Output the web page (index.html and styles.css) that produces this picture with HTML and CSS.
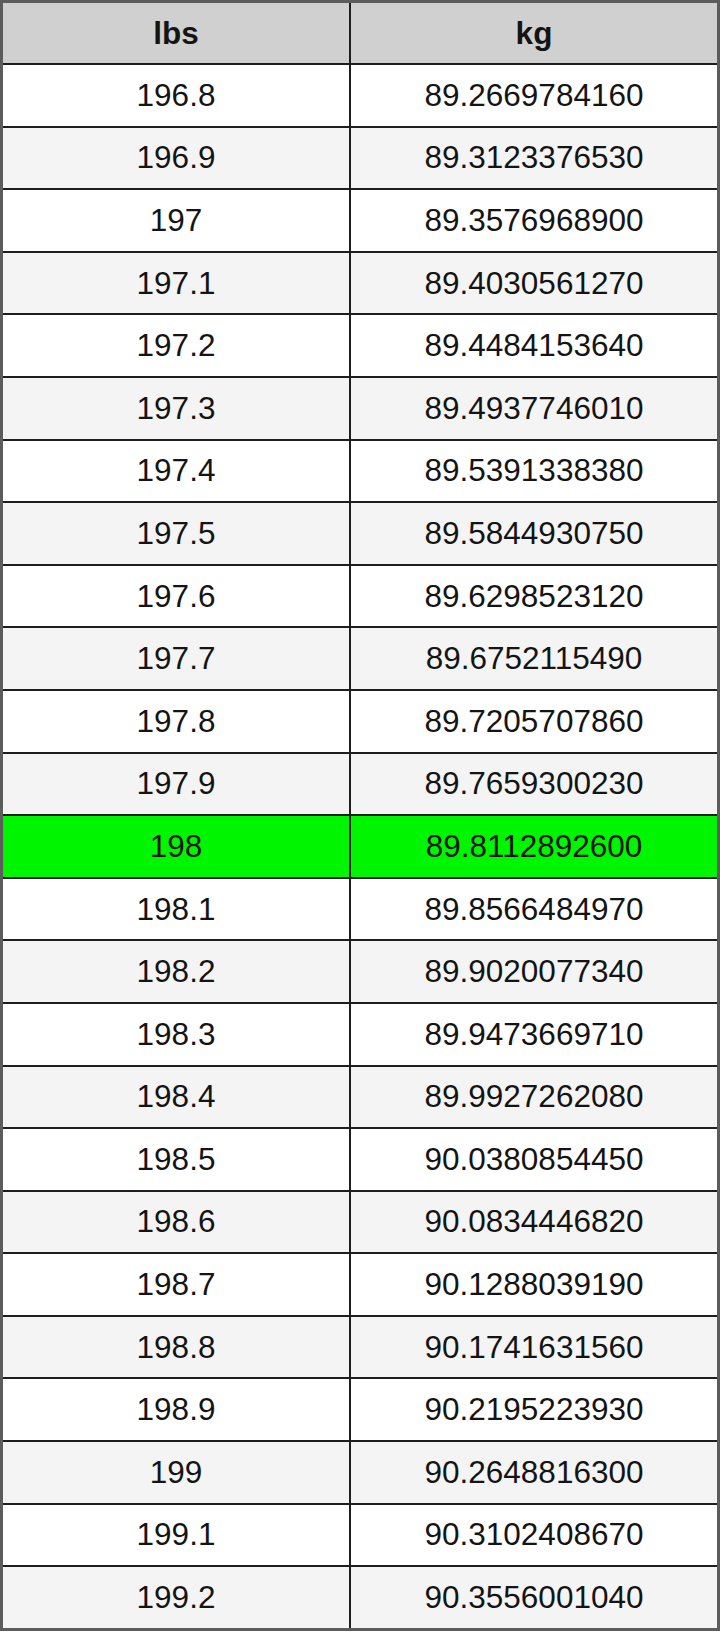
FILE: index.html
```html
<!DOCTYPE html>
<html>
<head>
<meta charset="utf-8">
<link rel="stylesheet" href="styles.css">
</head>
<body>
<div class="table">
  <div class="row head"><div class="cell">lbs</div><div class="cell">kg</div></div>
  <div class="row"><div class="cell">196.8</div><div class="cell">89.2669784160</div></div>
  <div class="row alt"><div class="cell">196.9</div><div class="cell">89.3123376530</div></div>
  <div class="row"><div class="cell">197</div><div class="cell">89.3576968900</div></div>
  <div class="row alt"><div class="cell">197.1</div><div class="cell">89.4030561270</div></div>
  <div class="row"><div class="cell">197.2</div><div class="cell">89.4484153640</div></div>
  <div class="row alt"><div class="cell">197.3</div><div class="cell">89.4937746010</div></div>
  <div class="row"><div class="cell">197.4</div><div class="cell">89.5391338380</div></div>
  <div class="row alt"><div class="cell">197.5</div><div class="cell">89.5844930750</div></div>
  <div class="row"><div class="cell">197.6</div><div class="cell">89.6298523120</div></div>
  <div class="row alt"><div class="cell">197.7</div><div class="cell">89.6752115490</div></div>
  <div class="row"><div class="cell">197.8</div><div class="cell">89.7205707860</div></div>
  <div class="row alt"><div class="cell">197.9</div><div class="cell">89.7659300230</div></div>
  <div class="row hl"><div class="cell">198</div><div class="cell">89.8112892600</div></div>
  <div class="row"><div class="cell">198.1</div><div class="cell">89.8566484970</div></div>
  <div class="row alt"><div class="cell">198.2</div><div class="cell">89.9020077340</div></div>
  <div class="row"><div class="cell">198.3</div><div class="cell">89.9473669710</div></div>
  <div class="row alt"><div class="cell">198.4</div><div class="cell">89.9927262080</div></div>
  <div class="row"><div class="cell">198.5</div><div class="cell">90.0380854450</div></div>
  <div class="row alt"><div class="cell">198.6</div><div class="cell">90.0834446820</div></div>
  <div class="row"><div class="cell">198.7</div><div class="cell">90.1288039190</div></div>
  <div class="row alt"><div class="cell">198.8</div><div class="cell">90.1741631560</div></div>
  <div class="row"><div class="cell">198.9</div><div class="cell">90.2195223930</div></div>
  <div class="row alt"><div class="cell">199</div><div class="cell">90.2648816300</div></div>
  <div class="row"><div class="cell">199.1</div><div class="cell">90.3102408670</div></div>
  <div class="row alt"><div class="cell">199.2</div><div class="cell">90.3556001040</div></div>
</div>
</body>
</html>
```
FILE: styles.css
```css
html, body {
  margin: 0;
  padding: 0;
  background: #ffffff;
}
.table {
  width: 720px;
  box-sizing: border-box;
  border: 3px solid #5c5c5c;
  font-family: "Liberation Sans", Arial, sans-serif;
  color: #141414;
}
.row {
  display: grid;
  grid-template-columns: 346px 1fr;
  height: 60.6px;
  border-bottom: 2px solid #1e1e1e;
  background: #ffffff;
}
.row:last-child {
  border-bottom: none;
}
.row.head {
  height: 60px;
  background: #d0d0d0;
  font-weight: bold;
}
.row.alt {
  background: #f4f4f4;
}
.row.hl {
  background: #00f500;
}
.cell {
  display: flex;
  align-items: center;
  justify-content: center;
  font-size: 31.5px;
  padding-top: 0;
}
.cell + .cell {
  border-left: 2px solid #1e1e1e;
}
```
